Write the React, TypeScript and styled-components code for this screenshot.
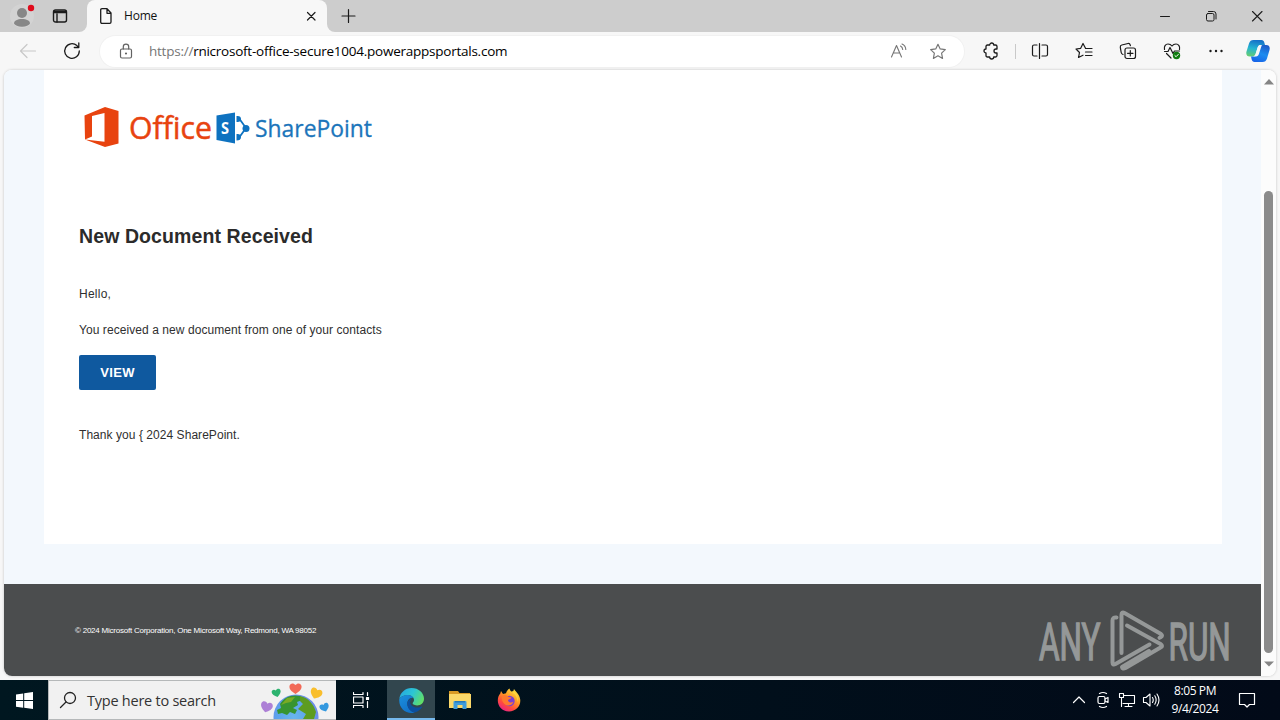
import React from "react";
import styled, { createGlobalStyle } from "styled-components";

const Global = createGlobalStyle`
  * { box-sizing: border-box; }
  body { margin: 0; background: #f7f7f7; overflow: hidden; }
  p, h1 { margin: 0; }
  button { border: 0; padding: 0; background: none; font: inherit; }
  svg { display: block; flex: none; }
`;

const ui = `"Open Sans", "Noto Sans", sans-serif`;

const Screen = styled.div`
  width: 1280px;
  height: 720px;
  display: flex;
  flex-direction: column;
  overflow: hidden;
  font-family: ${ui};
  color: #111;
`;

const TabStrip = styled.div`
  height: 32px;
  display: flex;
  background: #f7f7f7;
`;

const StripStart = styled.div`
  width: 87px;
  display: flex;
  align-items: center;
  background: #cdcdcd;
  border-bottom-right-radius: 8px;
  padding: 0 0 0 8px;
  gap: 13px;
`;

const TabGap = styled.div`
  width: 240px;
  background: linear-gradient(#cdcdcd 0 12px, #f7f7f7 12px);
`;

const Tab = styled.div`
  height: 32px;
  display: flex;
  align-items: center;
  padding: 0 10px 0 12px;
  background: #f7f7f7;
  border-radius: 8px 8px 0 0;
`;

const TabTitle = styled.span`
  flex: 1;
  padding-left: 11px;
  font-size: 12px;
  line-height: 16px;
  letter-spacing: -0.2px;
`;

const StripEnd = styled.div`
  flex: 1;
  display: flex;
  align-items: center;
  background: #cdcdcd;
  border-bottom-left-radius: 8px;
  padding: 0 15px 0 14px;
`;

const WindowButtons = styled.div`
  margin-left: auto;
  display: flex;
  gap: 30px;
`;

const Toolbar = styled.div`
  height: 38px;
  display: flex;
  align-items: center;
  padding: 0 8px 0 19px;
`;

const NavButtons = styled.div`
  display: flex;
  gap: 25px;
  width: 81px;
`;

const AddressBar = styled.div`
  width: 864px;
  height: 31px;
  display: flex;
  align-items: center;
  padding: 0 17px 0 18px;
  background: #fff;
  border-radius: 16px;
  box-shadow: 0 0 0 1px #f1f1f1;
`;

const Url = styled.span`
  flex: 1;
  padding-left: 15px;
  font-size: 13.5px;
  line-height: 20px;
  letter-spacing: -0.24px;
  white-space: nowrap;
  color: #000;
`;

const Scheme = styled.span`
  color: #767676;
`;

const AddressActions = styled.div`
  display: flex;
  gap: 22px;
`;

const ToolButtons = styled.div`
  display: flex;
  align-items: center;
  gap: 26px;
  padding-left: 18px;
`;

const Divider = styled.i`
  width: 1px;
  height: 15px;
  margin: 0 -11px;
  background: #c9c9c9;
`;

const CopilotButton = styled.div`
  margin-left: -5px;
`;

const Viewport = styled.main`
  height: 606px;
  margin: 0 4px;
  display: flex;
  border-radius: 8px;
  overflow: hidden;
  background: #fff;
  box-shadow: 0 0 2px 1px #dedede;
`;

const Page = styled.div`
  width: 1257px;
  display: flex;
  flex-direction: column;
  background: #f3f8fd;
  font-family: "Liberation Sans", Arial, sans-serif;
`;

const Card = styled.section`
  height: 474px;
  margin: 0 39px 40px 40px;
  padding: 32px 35px 0;
  background: #fff;
  color: #333;
`;

const Title = styled.h1`
  margin-top: 74px;
  font-size: 19.5px;
  line-height: 24px;
  letter-spacing: 0.1px;
  color: #2b2b2b;
`;

const Text = styled.p<{ $top: number; $spacing: number }>`
  margin-top: ${(p) => p.$top}px;
  font-size: 12px;
  line-height: 16px;
  letter-spacing: ${(p) => p.$spacing}px;
  color: #2f2f2f;
`;

const ViewButton = styled.button`
  display: block;
  width: 77px;
  height: 35px;
  margin-top: 17px;
  border-radius: 2px;
  background: #0f599f;
  color: #fff;
  font-size: 13px;
  font-weight: 700;
  letter-spacing: 0.3px;
`;

const Footer = styled.footer`
  flex: 1;
  display: flex;
  align-items: flex-end;
  justify-content: space-between;
  padding: 0 0 0 71px;
  background: #4b4d4e;
`;

const Copyright = styled.span`
  margin-bottom: 39px;
  font-size: 8px;
  line-height: 12px;
  letter-spacing: -0.23px;
  color: #fff;
`;

const Scrollbar = styled.div`
  flex: 1;
  display: flex;
  flex-direction: column;
  align-items: center;
  padding: 9px 0 9px;
  background: #fcfcfc;
`;

const Thumb = styled.div`
  width: 9px;
  height: 462px;
  margin: auto 0 8px;
  border-radius: 5px;
  background: #8b8b8b;
`;

const Taskbar = styled.footer`
  height: 40px;
  margin-top: 4px;
  display: flex;
  background: linear-gradient(90deg, #001720, #010f1b 60%, #020a18);
  color: #fff;
`;

const TaskItem = styled.div<{ $active?: boolean; $width?: number }>`
  width: ${(p) => p.$width ?? 49}px;
  display: flex;
  align-items: center;
  justify-content: center;
  background: ${(p) => (p.$active ? "#32464e" : "transparent")};
  border-bottom: ${(p) => (p.$active ? "2px solid #76b9ed" : "0")};
  padding-top: ${(p) => (p.$active ? "2px" : "0")};
`;

const Search = styled.div`
  width: 288px;
  display: flex;
  align-items: center;
  padding: 0 6px 0 10px;
  background: #f1f1f1;
  border: 1px solid #b5b8b9;
  border-right: 0;
  color: #333;
`;

const SearchText = styled.span`
  flex: 1;
  padding: 1px 0 0 10px;
  font-size: 14.5px;
  line-height: 20px;
  letter-spacing: -0.24px;
`;

const Tray = styled.div`
  margin-left: auto;
  display: flex;
  align-items: center;
  padding-right: 24px;
`;

const TrayIcons = styled.div`
  display: flex;
  align-items: center;
  gap: 6px;
`;

const Clock = styled.div`
  width: 70px;
  margin-right: 8px;
  font-size: 12px;
  line-height: 18px;
  letter-spacing: -0.4px;
  text-align: center;
`;

type IconProps = {
  w?: number;
  h?: number;
  box?: string;
  color?: string;
  sw?: number;
  children: React.ReactNode;
};

const Icon = ({ w = 16, h = 16, box, color = "#1b1b1b", sw = 1.2, children }: IconProps) => (
  <svg
    width={w}
    height={h}
    viewBox={box ?? `0 0 ${w} ${h}`}
    fill="none"
    stroke={color}
    strokeWidth={sw}
    strokeLinecap="round"
    strokeLinejoin="round"
  >
    {children}
  </svg>
);

const Profile = () => (
  <svg width="31" height="28" viewBox="0 0 31 28">
    <circle cx="14" cy="14" r="12" fill="#d3d3d3" />
    <circle cx="14" cy="11" r="5" fill="#878787" />
    <path d="M6 21.500c0-3 3.500-4.500 8-4.500s8 1.500 8 4.500c-1 2-4 3.200-8 3.200s-7-1.200-8-3.200z" fill="#878787" />
    <circle cx="23" cy="6" r="3.200" fill="#e00b1c" />
  </svg>
);

const Star = "M8 1.200l2.100 4.400 4.800.6-3.500 3.400.9 4.900L8 12.100l-4.300 2.400.9-4.900L1.100 6.200l4.800-.6z";

const Copilot = () => (
  <svg width="24" height="24" viewBox="0 0 24 24">
    <defs>
      <linearGradient id="cpA" x1="0.4" y1="0" x2="0.2" y2="1">
        <stop offset="0" stopColor="#1672c8" />
        <stop offset="0.5" stopColor="#25b5d2" />
        <stop offset="1" stopColor="#68ce6e" />
      </linearGradient>
      <linearGradient id="cpB" x1="0.7" y1="0" x2="0.3" y2="1">
        <stop offset="0" stopColor="#1d5bc8" />
        <stop offset="0.5" stopColor="#1c8cf0" />
        <stop offset="1" stopColor="#1764e8" />
      </linearGradient>
    </defs>
    <path d="M7.500 1h8c1.600 0 2.400 1 2.800 2.400L19 6h-4c-2 0-2.800 1-3.300 2.600L9.600 15c-.6 1.600-1.500 2.500-3.200 2.500H3.800C1 17.500-.3 15.600.5 12.600L3 4.500C3.800 2 5.200 1 7.500 1z" fill="url(#cpA)" />
    <path d="M16.500 23h-8c-1.600 0-2.400-1-2.800-2.400L5 17.500h2.500c2 0 3-.9 3.500-2.500L13 9c.6-2 1.600-3 3.500-3h3.700c2.800 0 4.100 1.900 3.300 4.900L21 19.500c-.8 2.500-2.200 3.500-4.500 3.500z" fill="url(#cpB)" />
    <path d="M11.600 8.500c.3-1 1-2 2-2.400h2.200l-2.900 9c-.5 1.600-1.300 2.400-2.900 2.500H7c1.500-.1 2.100-1 2.600-2.500z" fill="#f7f7f7" />
  </svg>
);

const Logos = () => (
  <svg width="300" height="48" viewBox="79 102 300 48">
    <path d="M84.500 115.500L105 107l13.500 4v32.500l-13.500 3.500-20-7.500 19.500 2.300V113l-12.500 3v20.500l-7 3z" fill="#e8430f" />
    <text x="129" y="138.500" fontFamily={ui} fontSize="31" fill="#e8430f" stroke="#e8430f" strokeWidth="0.5" textLength="83" lengthAdjust="spacingAndGlyphs">Office</text>
    <path d="M216.500 115.500L235 112.500v31l-18.500-3.500z" fill="#0e72c0" />
    <text x="221" y="134" fontFamily={ui} fontSize="16" fontWeight="700" fill="#fff" textLength="8" lengthAdjust="spacingAndGlyphs">S</text>
    <path d="M239.500 119l6.500 9-6.500 9" fill="none" stroke="#0e72c0" strokeWidth="1.800" />
    <g fill="#0e72c0">
      <path d="M236.500 116q4.500-.5 4.500 3t-4.500 3z" />
      <path d="M236.500 134q4.500-.5 4.500 3t-4.500 3.500z" />
      <circle cx="246" cy="128.500" r="3.500" />
    </g>
    <text x="255" y="137" fontFamily={ui} fontSize="24" fill="#1b75bb" stroke="#1b75bb" strokeWidth="0.3" textLength="117" lengthAdjust="spacingAndGlyphs">SharePoint</text>
  </svg>
);

const markFont = `Roboto, "Liberation Sans", sans-serif`;

const Watermark = () => (
  <svg width="227" height="92" viewBox="1034 584 227 92" opacity="0.8">
    <g fontFamily={markFont} fontSize="52" fill="#a8abab" stroke="#a8abab" strokeWidth="1.5">
      <text transform="translate(1039 659.5) scale(0.605 1)">ANY</text>
      <text transform="translate(1168.5 659.5) scale(0.605 1)">RUN</text>
    </g>
    <g fill="none" stroke="#a8abab" strokeWidth="4" strokeLinejoin="round" strokeLinecap="round">
      <path d="M1116.500 617.500q-4-.5-4 3v42q0 3 3 1.500l34-19.500" />
      <path d="M1121.500 653v-38q0-3.500 3-2l36.500 21q2 1.500 0 3l-1.500.8" />
      <path d="M1127 625.500l33.500 18.500q3 2 0 3.500l-35 20.500q-3 1.500-3.500-1l27-16" />
    </g>
  </svg>
);

const Earth = () => (
  <svg width="70" height="38" viewBox="0 0 70 38">
    <defs>
      <radialGradient id="sea" cx="0.45" cy="0.5" r="0.55">
        <stop offset="0" stopColor="#69b5ed" />
        <stop offset="0.7" stopColor="#5ba2ec" />
        <stop offset="1" stopColor="#718be8" />
      </radialGradient>
      <g id="heart">
        <path d="M0 5.500C-4 3-6.500 .5-6-2.500-5.500-5.500-2-6 0-3.500 2-6 5.500-5.500 6-2.500 6.500.5 4 3 0 5.500z" />
      </g>
    </defs>
    <circle cx="36" cy="36" r="22.500" fill="url(#sea)" />
    <path d="M20 23c4-7 12-10 20-8l2 4-5 2 1 3-5 3 4 2-2 4-5-2-3 3-5-2-4 1-1-4 4-2z" fill="#379431" />
    <path d="M40 15c9 2 14 9 16 16l-2 7H43l3-5-8-5 5-5-3-3z" fill="#5d9c20" />
    <path d="M21 24l6-7 8-1-4 5-5 1z" fill="#7aab24" />
    <use href="#heart" fill="#f26a58" transform="translate(35.500 7.500)" />
    <use href="#heart" fill="#2db36f" transform="translate(16.500 12) rotate(-15) scale(.75)" />
    <use href="#heart" fill="#f9be2c" transform="translate(56 12.500) rotate(22) scale(.98)" />
    <use href="#heart" fill="#ad80d6" transform="translate(6.500 26) rotate(15) scale(.98)" />
    <use href="#heart" fill="#3499df" transform="translate(64.500 26.500) rotate(-20) scale(.78)" />
  </svg>
);

const Edge = () => (
  <svg width="25" height="25" viewBox="0 0 24 24">
    <defs>
      <linearGradient id="edTop" x1="0" y1="0.2" x2="1" y2="0.6">
        <stop offset="0" stopColor="#26a7e0" />
        <stop offset="0.5" stopColor="#2cc5d5" />
        <stop offset="1" stopColor="#62df66" />
      </linearGradient>
      <linearGradient id="edLow" x1="0" y1="0" x2="0.6" y2="1">
        <stop offset="0" stopColor="#1b8fdc" />
        <stop offset="1" stopColor="#1272c9" />
      </linearGradient>
    </defs>
    <path d="M.3 10.500C1 4.500 6 0 12 0c7 0 12 4.800 12 10.300 0 4-3 6.400-6.700 6.400-3.200 0-4.200-1.200-4.200-2 0-.7 1.300-1.200 1.300-3.100C14.400 9 12 7 8.500 7 4 7 1.500 8.500.3 10.500z" fill="url(#edTop)" />
    <path d="M.3 10.500C2 8 5 6.800 8.500 6.800c2.500 0 4.500 1 5.400 2.700-4-.6-5.900 2.500-5.900 5.500 0 4 3.200 7 7 8.500-1 .3-2 .5-3 .5C5 24-.5 18 .3 10.500z" fill="url(#edLow)" />
    <path d="M13.900 9.500c-3.500.5-5.900 2.500-5.900 5.500 0 4 3 7.800 7 8.500 3-.7 5.500-2.500 7-5 .4-.6-.2-.9-.7-.6-1.300.6-2.700.9-4.300.9-3.500 0-6.300-2.300-6.300-5.300 0-2 1.200-3.500 3.200-4z" fill="#0c4f9e" />
  </svg>
);

const Explorer = () => (
  <svg width="22" height="20" viewBox="0 0 22 20">
    <path d="M0 1h9l1.500 2H21V18H0z" fill="#d99a24" />
    <path d="M0 4h22v14H0z" fill="#fbd869" />
    <path d="M4.500 19v-7q0-1 1-1h11q1 0 1 1v7h-4v-4h-5v4z" fill="#3f9cdc" />
    <path d="M6 11h10v1.500H6z" fill="#2779b8" />
  </svg>
);

const Firefox = () => (
  <svg width="24" height="24" viewBox="0 0 24 24">
    <defs>
      <linearGradient id="ff" x1="0.85" y1="0.05" x2="0.25" y2="1">
        <stop offset="0" stopColor="#ffe545" />
        <stop offset="0.4" stopColor="#ff9a24" />
        <stop offset="0.72" stopColor="#ff4a3d" />
        <stop offset="1" stopColor="#e8208a" />
      </linearGradient>
    </defs>
    <path d="M4 3l2 3 3-.8C9.500 3 11 1.500 12.500.5c.5 2.200 1.800 3 3.300 4L17 1c1 2 5.500 5 6.200 10.500C24 18 19 23.500 12 23.500S.8 18 .8 12.500C.8 9 2 7 3.300 5.500z" fill="url(#ff)" />
    <circle cx="12.500" cy="13" r="5.200" fill="#7a3fd2" />
    <path d="M5 8c3-2 5-1 6.500 1l3 .5c-.5 1.500-3 1.500-3.500 3 1 2.500 4 2.500 5.500 1-1 4-6 5.500-9 2.500C5 13.500 4.500 11 5 8z" fill="#ff7a2e" />
    <path d="M14 4c4 1.500 7 5 6 10 .6-1 .8-2 .8-3C21 7 18 4.500 16 3z" fill="#ffd83e" />
  </svg>
);

const App = () => (
  <Screen>
    <Global />
    <TabStrip>
      <StripStart>
        <Profile />
        <Icon w={16} h={16}>
          <rect x="1.500" y="2" width="13" height="12" rx="2" strokeWidth="1.400" />
          <path d="M2 3.500h12M2 4.500h12M5 6v8" strokeWidth="1.400" />
        </Icon>
      </StripStart>
      <TabGap>
        <Tab>
          <Icon w={14} h={18} sw={1.300}>
            <path d="M3 1.700h5l4 4.300v9q0 1.300-1.300 1.300H3q-1.300 0-1.300-1.300V3Q1.700 1.700 3 1.700zM8 2v4.300h4" />
          </Icon>
          <TabTitle>Home</TabTitle>
          <Icon w={12} h={12}>
            <path d="M2.500 2.500l7.500 7.500M10 2.500L2.500 10" />
          </Icon>
        </Tab>
      </TabGap>
      <StripEnd>
        <Icon w={15} h={16}>
          <path d="M7.500 1.500v13M1 8h13" />
        </Icon>
        <WindowButtons>
          <Icon w={16} h={16}>
            <path d="M3.500 8.500h9" strokeWidth="1" />
          </Icon>
          <Icon w={16} h={16} sw={1}>
            <rect x="3.500" y="5.500" width="7.500" height="7.500" rx="1.500" />
            <path d="M5.500 3.500h5q2.500 0 2.500 2.500v5" />
          </Icon>
          <Icon w={16} h={16} sw={1.100}>
            <path d="M3.500 3.500l9.500 9.500M13 3.500L3.500 13" />
          </Icon>
        </WindowButtons>
      </StripEnd>
    </TabStrip>

    <Toolbar>
      <NavButtons>
        <Icon w={18} h={18} color="#c8c8c8">
          <path d="M16.500 9h-15M8 2.500L1.500 9 8 15.500" />
        </Icon>
        <Icon w={20} h={18} sw={1.300}>
          <path d="M17.300 9a7.300 7.300 0 1 1-2.400-5.400l1.600 1.600M16.800 1v4.500h-4.500" />
        </Icon>
      </NavButtons>
      <AddressBar>
        <Icon w={16} h={17} color="#626262">
          <rect x="2.500" y="6" width="11" height="9" rx="1.500" />
          <path d="M5.300 6V3.800a2.700 2.700 0 0 1 5.400 0V6" />
          <circle cx="8" cy="10.500" r=".5" fill="#626262" />
        </Icon>
        <Url>
          <Scheme>https://</Scheme>rnicrosoft-office-secure1004.powerappsportals.com
        </Url>
        <AddressActions>
          <Icon w={18} h={17} color="#757575" sw={1.100}>
            <path d="M1.500 14L6.500 2.500l5 11.500M3.100 10h6.800M10.500 3q2 1 2.200 3.500M12 1q3.600 1.500 3.800 5.500" />
          </Icon>
          <Icon w={17} h={17} box="0.5 0 16 16" color="#757575" sw={1.100}>
            <path d={Star} />
          </Icon>
        </AddressActions>
      </AddressBar>
      <ToolButtons>
        <Icon w={18} h={18} sw={1.300}>
          <path d="M5.500 3h2.200a2 2 0 0 1 4 0h1.800q1.500 0 1.500 1.500V7h-1a2 2 0 0 0 0 4h1v2.500q0 1.500-1.500 1.500h-1.800a2 2 0 0 1-4 0H5.500q-1.500 0-1.500-1.500V11a2 2 0 0 1 0-4V4.500Q4 3 5.500 3z" />
        </Icon>
        <Divider />
        <Icon w={18} h={18} sw={1.200}>
          <path d="M6 3H3Q1.500 3 1.500 4.500v8Q1.500 14 3 14h3M11 3h4q1.500 0 1.500 1.500v8Q16.500 14 15 14h-4M8.500 1.500v15" />
        </Icon>
        <Icon w={18} h={18} sw={1.200}>
          <path d="M10.500 6.300L8 1.500 5.700 6.300 1 7l3.500 3.500-1 5 4.500-2.300M10.500 6.500H17M10.500 10H17M10.500 13.500H17" />
        </Icon>
        <Icon w={18} h={18} sw={1.200}>
          <rect x="6" y="6" width="10.500" height="10.500" rx="2" />
          <path d="M11.300 8.500v5.500M8.500 11.300H14M4 12.500Q2.500 12 2.200 10.500L1.300 5.300Q1 3.500 2.800 3L9 1.500q1.700-.3 2.200 1.500l.2.700" />
        </Icon>
        <Icon w={18} h={18} sw={1.200}>
          <path d="M1.500 7.500C.8 4.500 2.500 2 5 2q2.500 0 4 2 1.500-2 4-2c2.500 0 4.200 2.500 3.500 5.500M1.500 9.500H5l2-4 3 6 1.500-2.500h5M3.500 11.500L8 16" />
          <circle cx="13.500" cy="13.500" r="3.700" fill="#107c10" stroke="none" />
          <path d="M11.900 13.600l1.200 1.100 2.200-2.300" stroke="#fff" strokeWidth="1" />
        </Icon>
        <Icon w={18} h={18}>
          <g fill="#1b1b1b" stroke="none">
            <circle cx="3.500" cy="9" r="1.200" />
            <circle cx="9" cy="9" r="1.200" />
            <circle cx="14.500" cy="9" r="1.200" />
          </g>
        </Icon>
        <CopilotButton>
          <Copilot />
        </CopilotButton>
      </ToolButtons>
    </Toolbar>

    <Viewport>
      <Page>
        <Card>
          <Logos />
          <Title>New Document Received</Title>
          <Text $top={38} $spacing={0.25}>Hello,</Text>
          <Text $top={20} $spacing={0.07}>You received a new document from one of your contacts</Text>
          <ViewButton type="button">VIEW</ViewButton>
          <Text $top={37} $spacing={0.05}>Thank you {"{"} 2024 SharePoint.</Text>
        </Card>
        <Footer>
          <Copyright>© 2024 Microsoft Corporation, One Microsoft Way, Redmond, WA 98052</Copyright>
          <Watermark />
        </Footer>
      </Page>
      <Scrollbar>
        <svg width="10" height="6" viewBox="0 0 10 6">
          <path d="M5 0l5 5.500H0z" fill="#858585" />
        </svg>
        <Thumb />
        <svg width="10" height="6" viewBox="0 0 10 6">
          <path d="M5 5.500l5-5H0z" fill="#858585" />
        </svg>
      </Scrollbar>
    </Viewport>

    <Taskbar>
      <TaskItem $width={48}>
        <svg width="17" height="17" viewBox="0 0 17 17">
          <path d="M0 2.500l7.200-1v6.600H0zM8.200 1.300L17 0v8.100H8.200zM0 9.100h7.200v6.600l-7.200-1zM8.200 9.100H17V17l-8.800-1.200z" fill="#fff" />
        </svg>
      </TaskItem>
      <Search>
        <Icon w={18} h={18} color="#222" sw={1.300}>
          <circle cx="11" cy="7" r="5.500" />
          <path d="M7 11l-5.500 5.500" />
        </Icon>
        <SearchText>Type here to search</SearchText>
        <Earth />
      </Search>
      <TaskItem $width={51}>
        <Icon w={18} h={18} box="3 0 18 18" color="#fff" sw={1.200}>
          <path d="M3.500 1.500v2h9.500v-2M3.500 16.500v-2h9.500v2M3.500 6H13v6H3.500zM17.500 1.500v3M17.500 10.500v6" />
          <path d="M16.500 6.500h2v2h-2z" fill="#fff" />
        </Icon>
      </TaskItem>
      <TaskItem $active $width={48}>
        <Edge />
      </TaskItem>
      <TaskItem>
        <Explorer />
      </TaskItem>
      <TaskItem>
        <Firefox />
      </TaskItem>
      <Tray>
        <TrayIcons>
          <Icon w={18} h={18} color="#fff">
            <path d="M3.500 11.500L9 6l5.500 5.500" />
          </Icon>
          <Icon w={18} h={18} color="#fff" sw={1.200}>
            <rect x="4" y="5.500" width="7" height="7" rx="1.500" />
            <path d="M11 8l3-1.500v5L11 10M5.500 2.500q3.500-2 7 0M5.500 15.500q3.500 2 7 0" />
          </Icon>
          <Icon w={18} h={18} color="#fff" sw={1.100}>
            <path d="M6 4.500h10.500v8H5M10.500 12.500v3M7 15.500h7M1.500 2.500h4v4h-4zM3.500 6.500v9" />
          </Icon>
          <Icon w={18} h={18} color="#fff" sw={1.100}>
            <path d="M1.500 6.500H4L8 3v12l-4-3.500H1.500zM10.500 6.500q1.500 2.500 0 5M12.800 4.800q2.700 4.200 0 8.400M15 3q4 6 0 12" />
          </Icon>
        </TrayIcons>
        <Clock>
          8:05 PM
          <br />
          9/4/2024
        </Clock>
        <Icon w={18} h={18} color="#fff" sw={1.200}>
          <path d="M1.500 2.500h15v11h-5L9 16l-2.500-2.500h-5z" />
        </Icon>
      </Tray>
    </Taskbar>
  </Screen>
);

export default App;
